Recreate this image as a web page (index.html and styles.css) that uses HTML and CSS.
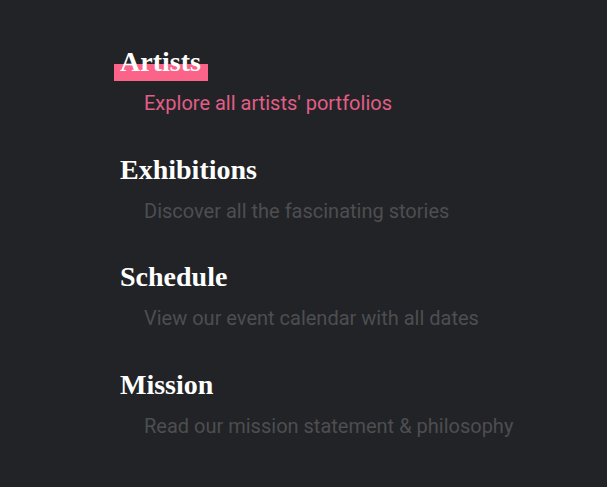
FILE: index.html
```html
<!DOCTYPE html>
<html>
<head>
    <title>Menu</title>
    <link rel="stylesheet" href="styles.css">
</head>
<body>
    <nav class="menu">
        <a class="menu-item active" href="#">
            <span class="menu-title">Artists</span>
            <span class="menu-desc">Explore all artists' portfolios</span>
        </a>
        <a class="menu-item" href="#">
            <span class="menu-title">Exhibitions</span>
            <span class="menu-desc">Discover all the fascinating stories</span>
        </a>
        <a class="menu-item" href="#">
            <span class="menu-title">Schedule</span>
            <span class="menu-desc">View our event calendar with all dates</span>
        </a>
        <a class="menu-item" href="#">
            <span class="menu-title">Mission</span>
            <span class="menu-desc">Read our mission statement &amp; philosophy</span>
        </a>
    </nav>
</body>
</html>
```

FILE: styles.css
```css
body {
    margin: 0;
    background-color: #222326;
    height: 487px;
}

.menu {
    display: flex;
    flex-direction: column;
    padding: 46px 0 0 120px;
    gap: 39.5px;
}

.menu-item {
    display: flex;
    flex-direction: column;
    align-items: flex-start;
    text-decoration: none;
}

.menu-title {
    position: relative;
    font-family: "Liberation Serif", serif;
    font-weight: bold;
    font-size: 28px;
    line-height: 32px;
    color: #fff;
}

.active .menu-title::before {
    content: "";
    position: absolute;
    left: -6px;
    right: -7px;
    top: 18px;
    height: 17px;
    background-color: #fc6389;
    z-index: -1;
}

.menu-desc {
    margin: 14px 0 0 24px;
    font-family: Roboto, sans-serif;
    font-size: 20px;
    line-height: 22px;
    color: #4d4e51;
}

.active .menu-desc {
    color: #e15e86;
}
```
